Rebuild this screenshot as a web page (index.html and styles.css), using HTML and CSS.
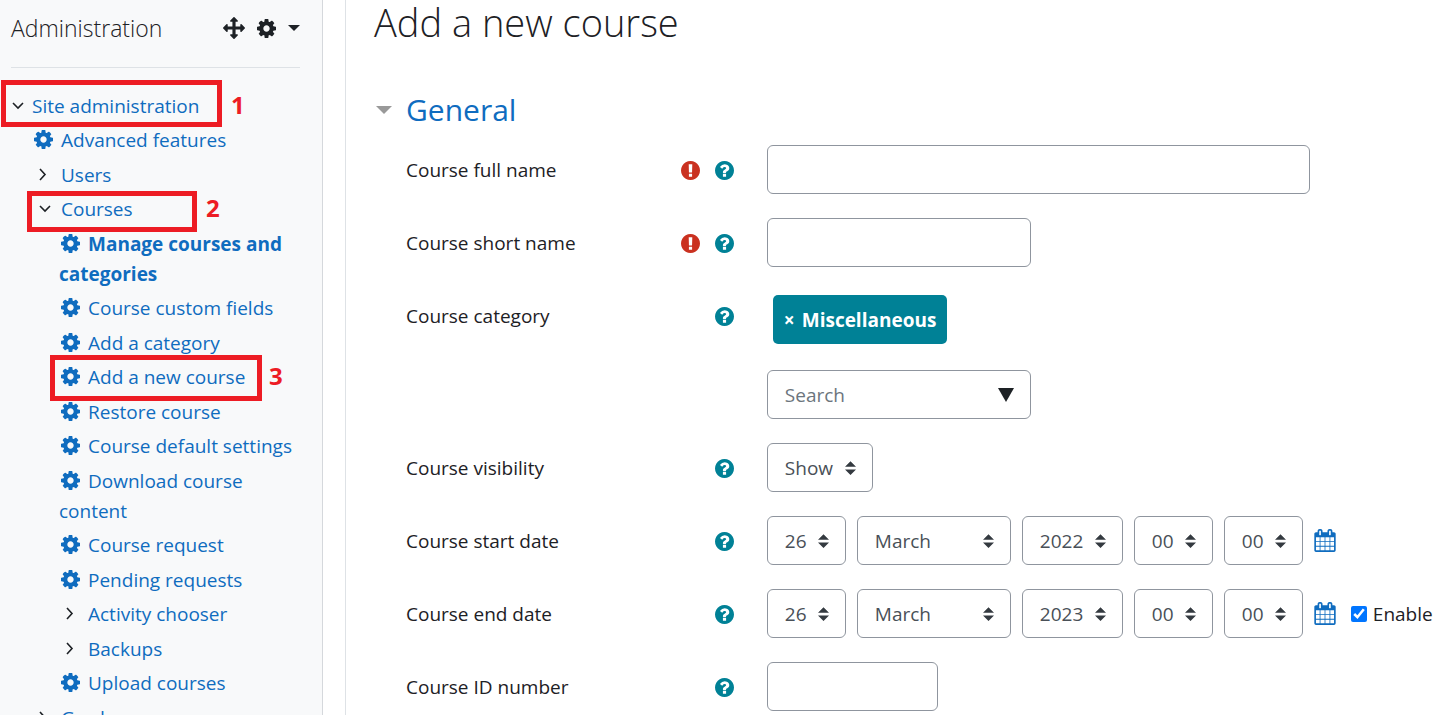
FILE: index.html
```html
<!DOCTYPE html>
<html lang="en">

<head>
    <meta charset="UTF-8">
    <meta name="viewport" content="width=device-width, initial-scale=1.0">
    <title>Add a new course</title>
    <link rel="stylesheet" href="styles.css">
</head>

<body>

    <!-- Icon sprite -->
    <svg class="sprite" aria-hidden="true">
        <symbol id="cog" viewBox="128 128 1536 1536">
            <path d="M1152 896q0-106-75-181t-181-75-181 75-75 181 75 181 181 75 181-75 75-181zm512-109v222q0 12-8 23t-20 13l-185 28q-19 54-39 91 35 50 107 138 10 12 10 25t-9 23q-27 37-99 108t-94 71q-12 0-26-9l-138-108q-44 23-91 38-16 136-29 186-7 28-36 28h-222q-14 0-24.5-8.5t-11.5-21.5l-28-184q-49-16-90-37l-141 107q-10 9-25 9-14 0-25-11-126-114-165-168-7-10-7-23 0-12 8-23 15-21 51-66.5t54-70.5q-27-50-41-99l-183-27q-13-2-21-12.5t-8-23.5v-222q0-12 8-23t19-13l186-28q14-46 39-92-40-57-107-138-10-12-10-24 0-10 9-23 26-36 98.5-107.5t94.5-71.5q13 0 26 10l138 107q44-23 91-38 16-136 29-186 7-28 36-28h222q14 0 24.5 8.5t11.5 21.5l28 184q49 16 90 37l142-107q9-9 24-9 13 0 25 10 129 119 165 170 7 8 7 22 0 12-8 23-15 21-51 66.5t-54 70.5q26 50 41 98l183 28q13 2 21 12.5t8 23.5z" />
        </symbol>
        <symbol id="move" viewBox="0 0 1792 1792">
            <path d="M1792 896q0 26-19 45l-256 256q-19 19-45 19t-45-19-19-45v-128h-384v384h128q26 0 45 19t19 45-19 45l-256 256q-19 19-45 19t-45-19l-256-256q-19-19-19-45t19-45 45-19h128v-384h-384v128q0 26-19 45t-45 19-45-19l-256-256q-19-19-19-45t19-45l256-256q19-19 45-19t45 19 19 45v128h384v-384h-128q-26 0-45-19t-19-45 19-45l256-256q19-19 45-19t45 19l256 256q19 19 19 45t-19 45-45 19h-128v384h384v-128q0-26 19-45t45-19 45 19l256 256q19 19 19 45z" />
        </symbol>
        <symbol id="help" viewBox="128 128 1536 1536">
            <path d="M1024 1376v-192q0-14-9-23t-23-9h-192q-14 0-23 9t-9 23v192q0 14 9 23t23 9h192q14 0 23-9t9-23zm256-672q0-88-55.5-163t-138.5-116-170-41q-243 0-371 213-15 24 8 42l132 100q7 6 19 6 16 0 25-12 53-68 86-92 34-24 86-24 48 0 85.5 26t37.5 59q0 38-20 61t-68 45q-63 28-115.5 86.5t-52.5 125.5v36q0 14 9 23t23 9h192q14 0 23-9t9-23q0-19 21.5-49.5t54.5-49.5q32-18 49-28.5t46-35 44.5-48 28-60.5 12.5-81zm384 192q0 209-103 385.5t-279.5 279.5-385.5 103-385.5-103-279.5-279.5-103-385.5 103-385.5 279.5-279.5 385.5-103 385.5 103 279.5 279.5 103 385.5z" />
        </symbol>
        <symbol id="required" viewBox="128 128 1536 1536">
            <path d="M896 128q209 0 385.5 103t279.5 279.5 103 385.5-103 385.5-279.5 279.5-385.5 103-385.5-103-279.5-279.5-103-385.5 103-385.5 279.5-279.5 385.5-103zm128 1247v-190q0-14-9-23.5t-22-9.5h-192q-13 0-23 10t-10 23v190q0 13 10 23t23 10h192q13 0 22-9.5t9-23.5zm-2-344l18-621q0-12-10-18-10-8-24-8h-220q-14 0-24 8-10 6-10 18l17 621q0 10 10 17.5t24 7.5h185q14 0 23.5-7.5t10.5-17.5z" />
        </symbol>
        <symbol id="calendar" viewBox="64 0 1664 1792">
            <path d="M192 1664h288v-288h-288v288zm352 0h320v-288h-320v288zm-352-352h288v-320h-288v320zm352 0h320v-320h-320v320zm-352-384h288v-288h-288v288zm736 736h320v-288h-320v288zm-384-736h320v-288h-320v288zm768 736h288v-288h-288v288zm-384-352h320v-320h-320v320zm-352-864v-288q0-13-9.5-22.5t-22.5-9.5h-64q-13 0-22.5 9.5t-9.5 22.5v288q0 13 9.5 22.5t22.5 9.5h64q13 0 22.5-9.5t9.5-22.5zm736 864h288v-320h-288v320zm-384-384h320v-288h-320v288zm384 0h288v-288h-288v288zm32-480v-288q0-13-9.5-22.5t-22.5-9.5h-64q-13 0-22.5 9.5t-9.5 22.5v288q0 13 9.5 22.5t22.5 9.5h64q13 0 22.5-9.5t9.5-22.5zm384-64v1280q0 52-38 90t-90 38h-1408q-52 0-90-38t-38-90v-1280q0-52 38-90t90-38h128v-96q0-66 47-113t113-47h64q66 0 113 47t47 113v96h384v-96q0-66 47-113t113-47h64q66 0 113 47t47 113v96h128q52 0 90 38t38 90z" />
        </symbol>
        <symbol id="open" viewBox="0 0 12 19">
            <path d="M1 6l5 5 5-5" fill="none" stroke="#1d2125" stroke-width="1.6" />
        </symbol>
        <symbol id="open-indent" viewBox="0 0 19 19">
            <path d="M6 7l5 5 5-5" fill="none" stroke="#1d2125" stroke-width="1.6" />
        </symbol>
        <symbol id="closed" viewBox="0 0 19 19">
            <path d="M6 4l5 5.500-5 5.500" fill="none" stroke="#1d2125" stroke-width="1.6" />
        </symbol>
    </svg>

    <div class="page">

        <!-- Administration block -->
        <aside class="sidebar">
            <div class="block-header">
                <h2>Administration</h2>
                <div class="block-actions">
                    <button type="button" class="icon-button" aria-label="Move block"><svg class="move-icon"><use href="#move" /></svg></button>
                    <button type="button" class="icon-button" aria-label="Block settings"><svg class="cog-icon"><use href="#cog" /></svg><span class="caret"></span></button>
                </div>
            </div>

            <ul class="tree">
                <li>
                    <a href="#" class="root marked mark-one"><svg class="chevron"><use href="#open" /></svg>Site administration<span class="step">1</span></a>
                    <ul>
                        <li><a href="#"><svg class="node-icon"><use href="#cog" /></svg>Advanced features</a></li>
                        <li><a href="#"><svg class="node-icon"><use href="#closed" /></svg>Users</a></li>
                        <li>
                            <a href="#" class="marked mark-two"><svg class="node-icon"><use href="#open-indent" /></svg>Courses<span class="step">2</span></a>
                            <ul class="courses">
                                <li><a href="#" class="strong"><svg class="node-icon"><use href="#cog" /></svg>Manage courses and categories</a></li>
                                <li><a href="#"><svg class="node-icon"><use href="#cog" /></svg>Course custom fields</a></li>
                                <li><a href="#"><svg class="node-icon"><use href="#cog" /></svg>Add a category</a></li>
                                <li><a href="#" class="marked mark-three"><svg class="node-icon"><use href="#cog" /></svg>Add a new course<span class="step">3</span></a></li>
                                <li><a href="#"><svg class="node-icon"><use href="#cog" /></svg>Restore course</a></li>
                                <li><a href="#"><svg class="node-icon"><use href="#cog" /></svg>Course default settings</a></li>
                                <li><a href="#"><svg class="node-icon"><use href="#cog" /></svg>Download course content</a></li>
                                <li><a href="#"><svg class="node-icon"><use href="#cog" /></svg>Course request</a></li>
                                <li><a href="#"><svg class="node-icon"><use href="#cog" /></svg>Pending requests</a></li>
                                <li><a href="#"><svg class="node-icon"><use href="#closed" /></svg>Activity chooser</a></li>
                                <li><a href="#"><svg class="node-icon"><use href="#closed" /></svg>Backups</a></li>
                                <li><a href="#"><svg class="node-icon"><use href="#cog" /></svg>Upload courses</a></li>
                            </ul>
                        </li>
                        <li><a href="#"><svg class="node-icon"><use href="#closed" /></svg>Grades</a></li>
                    </ul>
                </li>
            </ul>
        </aside>

        <!-- Course form -->
        <main class="content">
            <h1>Add a new course</h1>

            <form>
                <h3><a href="#"><span class="toggle"></span>General</a></h3>

                <div class="form-row">
                    <div class="form-label">
                        <label for="fullname">Course full name</label>
                        <svg class="required-icon"><use href="#required" /></svg>
                        <button type="button" class="icon-button" aria-label="Help with Course full name"><svg class="help-icon"><use href="#help" /></svg></button>
                    </div>
                    <input type="text" id="fullname" class="input-wide">
                </div>

                <div class="form-row">
                    <div class="form-label">
                        <label for="shortname">Course short name</label>
                        <svg class="required-icon"><use href="#required" /></svg>
                        <button type="button" class="icon-button" aria-label="Help with Course short name"><svg class="help-icon"><use href="#help" /></svg></button>
                    </div>
                    <input type="text" id="shortname" class="input-medium">
                </div>

                <div class="form-row">
                    <div class="form-label">
                        <label for="category">Course category</label>
                        <button type="button" class="icon-button" aria-label="Help with Course category"><svg class="help-icon"><use href="#help" /></svg></button>
                    </div>
                    <div class="category">
                        <button type="button" class="tag"><span class="remove">×</span>Miscellaneous</button>
                        <div class="search">
                            <input type="text" id="category" class="input-medium" placeholder="Search">
                            <button type="button" class="search-arrow" aria-label="Show categories"></button>
                        </div>
                    </div>
                </div>

                <div class="form-row">
                    <div class="form-label">
                        <label for="visible">Course visibility</label>
                        <button type="button" class="icon-button" aria-label="Help with Course visibility"><svg class="help-icon"><use href="#help" /></svg></button>
                    </div>
                    <select id="visible" class="select-show">
                        <option>Show</option>
                        <option>Hide</option>
                    </select>
                </div>

                <div class="form-row">
                    <div class="form-label">
                        <label for="startday">Course start date</label>
                        <button type="button" class="icon-button" aria-label="Help with Course start date"><svg class="help-icon"><use href="#help" /></svg></button>
                    </div>
                    <div class="date">
                        <select id="startday" class="select-short"><option>26</option></select>
                        <select class="select-month" aria-label="Start month"><option>March</option></select>
                        <select class="select-year" aria-label="Start year"><option>2022</option></select>
                        <select class="select-short" aria-label="Start hour"><option>00</option></select>
                        <select class="select-short" aria-label="Start minute"><option>00</option></select>
                        <a href="#" aria-label="Calendar"><svg class="calendar-icon"><use href="#calendar" /></svg></a>
                    </div>
                </div>

                <div class="form-row">
                    <div class="form-label">
                        <label for="endday">Course end date</label>
                        <button type="button" class="icon-button" aria-label="Help with Course end date"><svg class="help-icon"><use href="#help" /></svg></button>
                    </div>
                    <div class="date">
                        <select id="endday" class="select-short"><option>26</option></select>
                        <select class="select-month" aria-label="End month"><option>March</option></select>
                        <select class="select-year" aria-label="End year"><option>2023</option></select>
                        <select class="select-short" aria-label="End hour"><option>00</option></select>
                        <select class="select-short" aria-label="End minute"><option>00</option></select>
                        <a href="#" aria-label="Calendar"><svg class="calendar-icon"><use href="#calendar" /></svg></a>
                        <label class="enable"><input type="checkbox" checked>Enable</label>
                    </div>
                </div>

                <div class="form-row">
                    <div class="form-label">
                        <label for="idnumber">Course ID number</label>
                        <button type="button" class="icon-button" aria-label="Help with Course ID number"><svg class="help-icon"><use href="#help" /></svg></button>
                    </div>
                    <input type="text" id="idnumber" class="input-small">
                </div>
            </form>
        </main>
    </div>

</body>

</html>
```
FILE: styles.css
```css
* {
    box-sizing: border-box;
}

body {
    margin: 0;
    font-family: "Segoe UI", "Open Sans", "Noto Sans", sans-serif;
    font-size: 19px;
    line-height: 30px;
    color: #1d2125;
    background-color: #fff;
}

a {
    color: #0f6cbf;
    text-decoration: none;
}

ul {
    list-style: none;
    margin: 0;
    padding: 0;
}

svg {
    fill: currentColor;
}

.sprite {
    display: none;
}

.page {
    display: flex;
    gap: 22px;
    height: 100vh;
    overflow: hidden;
}

/* Sidebar */
.sidebar {
    flex: 0 0 323px;
    padding: 11px 22px 0 11px;
    background-color: #f8f9fa;
    border-right: 1px solid #d5d8dc;
}

.block-header {
    display: flex;
    justify-content: space-between;
    align-items: center;
    padding-bottom: 22px;
    border-bottom: 1px solid #dee2e6;
}

.block-header h2 {
    margin: 0;
    font-size: 23px;
    font-weight: 300;
    line-height: 34px;
}

.block-actions {
    display: flex;
    gap: 12px;
}

.icon-button {
    display: flex;
    align-items: center;
    padding: 0;
    border: none;
    background: none;
    color: inherit;
    cursor: pointer;
}

.move-icon {
    width: 22px;
    height: 22px;
}

.cog-icon {
    width: 19px;
    height: 19px;
}

.caret {
    margin-left: 12px;
    border-top: 6px solid #1d2125;
    border-left: 6px solid transparent;
    border-right: 6px solid transparent;
}

/* Navigation tree */
.tree {
    padding-top: 23px;
}

.tree a {
    display: block;
}

.tree ul {
    padding-left: 21px;
}

.tree ul ul {
    padding-left: 27px;
}

.tree ul li {
    padding-top: 4px;
}

.tree ul li:nth-child(even) {
    padding-top: 5px;
}

.tree .courses li:nth-child(odd) {
    padding-top: 5px;
}

.tree .courses li:nth-child(even) {
    padding-top: 4px;
}

.tree .strong {
    font-weight: 700;
}

.chevron {
    width: 12px;
    height: 19px;
    margin: 0 8px 0 1px;
    vertical-align: -3px;
}

.node-icon {
    width: 19px;
    height: 19px;
    margin: 0 8px 0 2px;
    vertical-align: -2px;
}

/* Numbered callouts */
.marked {
    position: relative;
}

.marked::before {
    content: "";
    position: absolute;
    box-sizing: border-box;
    border: 5px solid #ed1c24;
}

.mark-one::before {
    top: -11px;
    left: -10px;
    width: 221px;
    height: 47px;
}

.mark-two::before {
    top: -3px;
    left: -5px;
    width: 170px;
    height: 41px;
}

.mark-three::before {
    top: -7px;
    left: -9px;
    width: 212px;
    height: 46px;
}

.step {
    position: absolute;
    top: -1px;
    font-size: 24px;
    font-weight: 700;
    color: #ed1c24;
}

.mark-one .step {
    left: 220px;
}

.mark-two .step {
    left: 174px;
}

.mark-three .step {
    left: 210px;
}

/* Form */
.content {
    flex: 1;
    min-width: 0;
    padding: 0 8px 0 28px;
    border-left: 1px solid #dee2e6;
}

h1 {
    margin: 0;
    font-size: 38px;
    font-weight: 300;
    line-height: 44px;
}

h3 {
    margin: 47px 0 16px;
    font-size: 30px;
    font-weight: 400;
    line-height: 38px;
}

h3 a {
    display: flex;
    align-items: center;
    gap: 14px;
}

.toggle {
    margin-left: 2px;
    border-top: 8px solid #999;
    border-left: 8px solid transparent;
    border-right: 8px solid transparent;
}

.form-row {
    display: grid;
    grid-template-columns: 35% 1fr;
    align-items: start;
    justify-items: start;
    margin: 0 0 24px 32px;
}

.form-label {
    display: flex;
    justify-self: stretch;
    align-items: center;
    gap: 15px;
    padding: 10px 33px 0 0;
}

.form-label label {
    flex: 1;
}

.required-icon,
.help-icon {
    width: 19px;
    height: 19px;
}

.required-icon {
    color: #ca3120;
}

.help-icon {
    color: #008196;
}

input[type="text"],
select {
    height: 49px;
    max-width: 100%;
    padding: 0 17px;
    border: 1px solid #8f959e;
    border-radius: 6px;
    background-color: #fff;
    font-family: inherit;
    font-size: 19px;
    color: #495057;
}

input::placeholder {
    color: #6c757d;
}

select {
    appearance: none;
    background-image: url("data:image/svg+xml,%3csvg xmlns='http://www.w3.org/2000/svg' viewBox='0 0 4 5'%3e%3cpath fill='%23343a40' d='M2 0L0 2h4zm0 5L0 3h4z'/%3e%3c/svg%3e");
    background-repeat: no-repeat;
    background-position: right 16px center;
    background-size: 11px 14px;
}

.input-wide {
    width: 543px;
}

.input-medium {
    width: 264px;
}

.input-small {
    width: 171px;
}

.select-show {
    width: 106px;
}

.select-short {
    width: 79px;
}

.select-month {
    width: 154px;
}

.select-year {
    width: 101px;
}

.category {
    display: flex;
    flex-direction: column;
    align-items: flex-start;
    gap: 26px;
    padding-top: 4px;
}

.tag {
    height: 49px;
    margin-left: 6px;
    padding: 0 11px;
    border: none;
    border-radius: 5px;
    background-color: #008196;
    font-family: inherit;
    font-size: 19px;
    font-weight: 700;
    color: #fff;
}

.remove {
    margin-right: 7px;
}

.search {
    position: relative;
}

.search-arrow {
    position: absolute;
    top: 18px;
    right: 17px;
    padding: 0;
    border: 8px solid transparent;
    border-top: 14px solid #1d2125;
    border-bottom: 0;
    background: none;
}

.date {
    display: flex;
    align-items: center;
    gap: 11px;
}

.date a {
    display: flex;
    color: #0f6cbf;
}

.calendar-icon {
    width: 22px;
    height: 23px;
}

.enable {
    display: flex;
    align-items: center;
    gap: 6px;
    margin-left: 4px;
}

.enable input {
    width: 16px;
    height: 16px;
    margin: 0;
    accent-color: #0075ff;
}
```
